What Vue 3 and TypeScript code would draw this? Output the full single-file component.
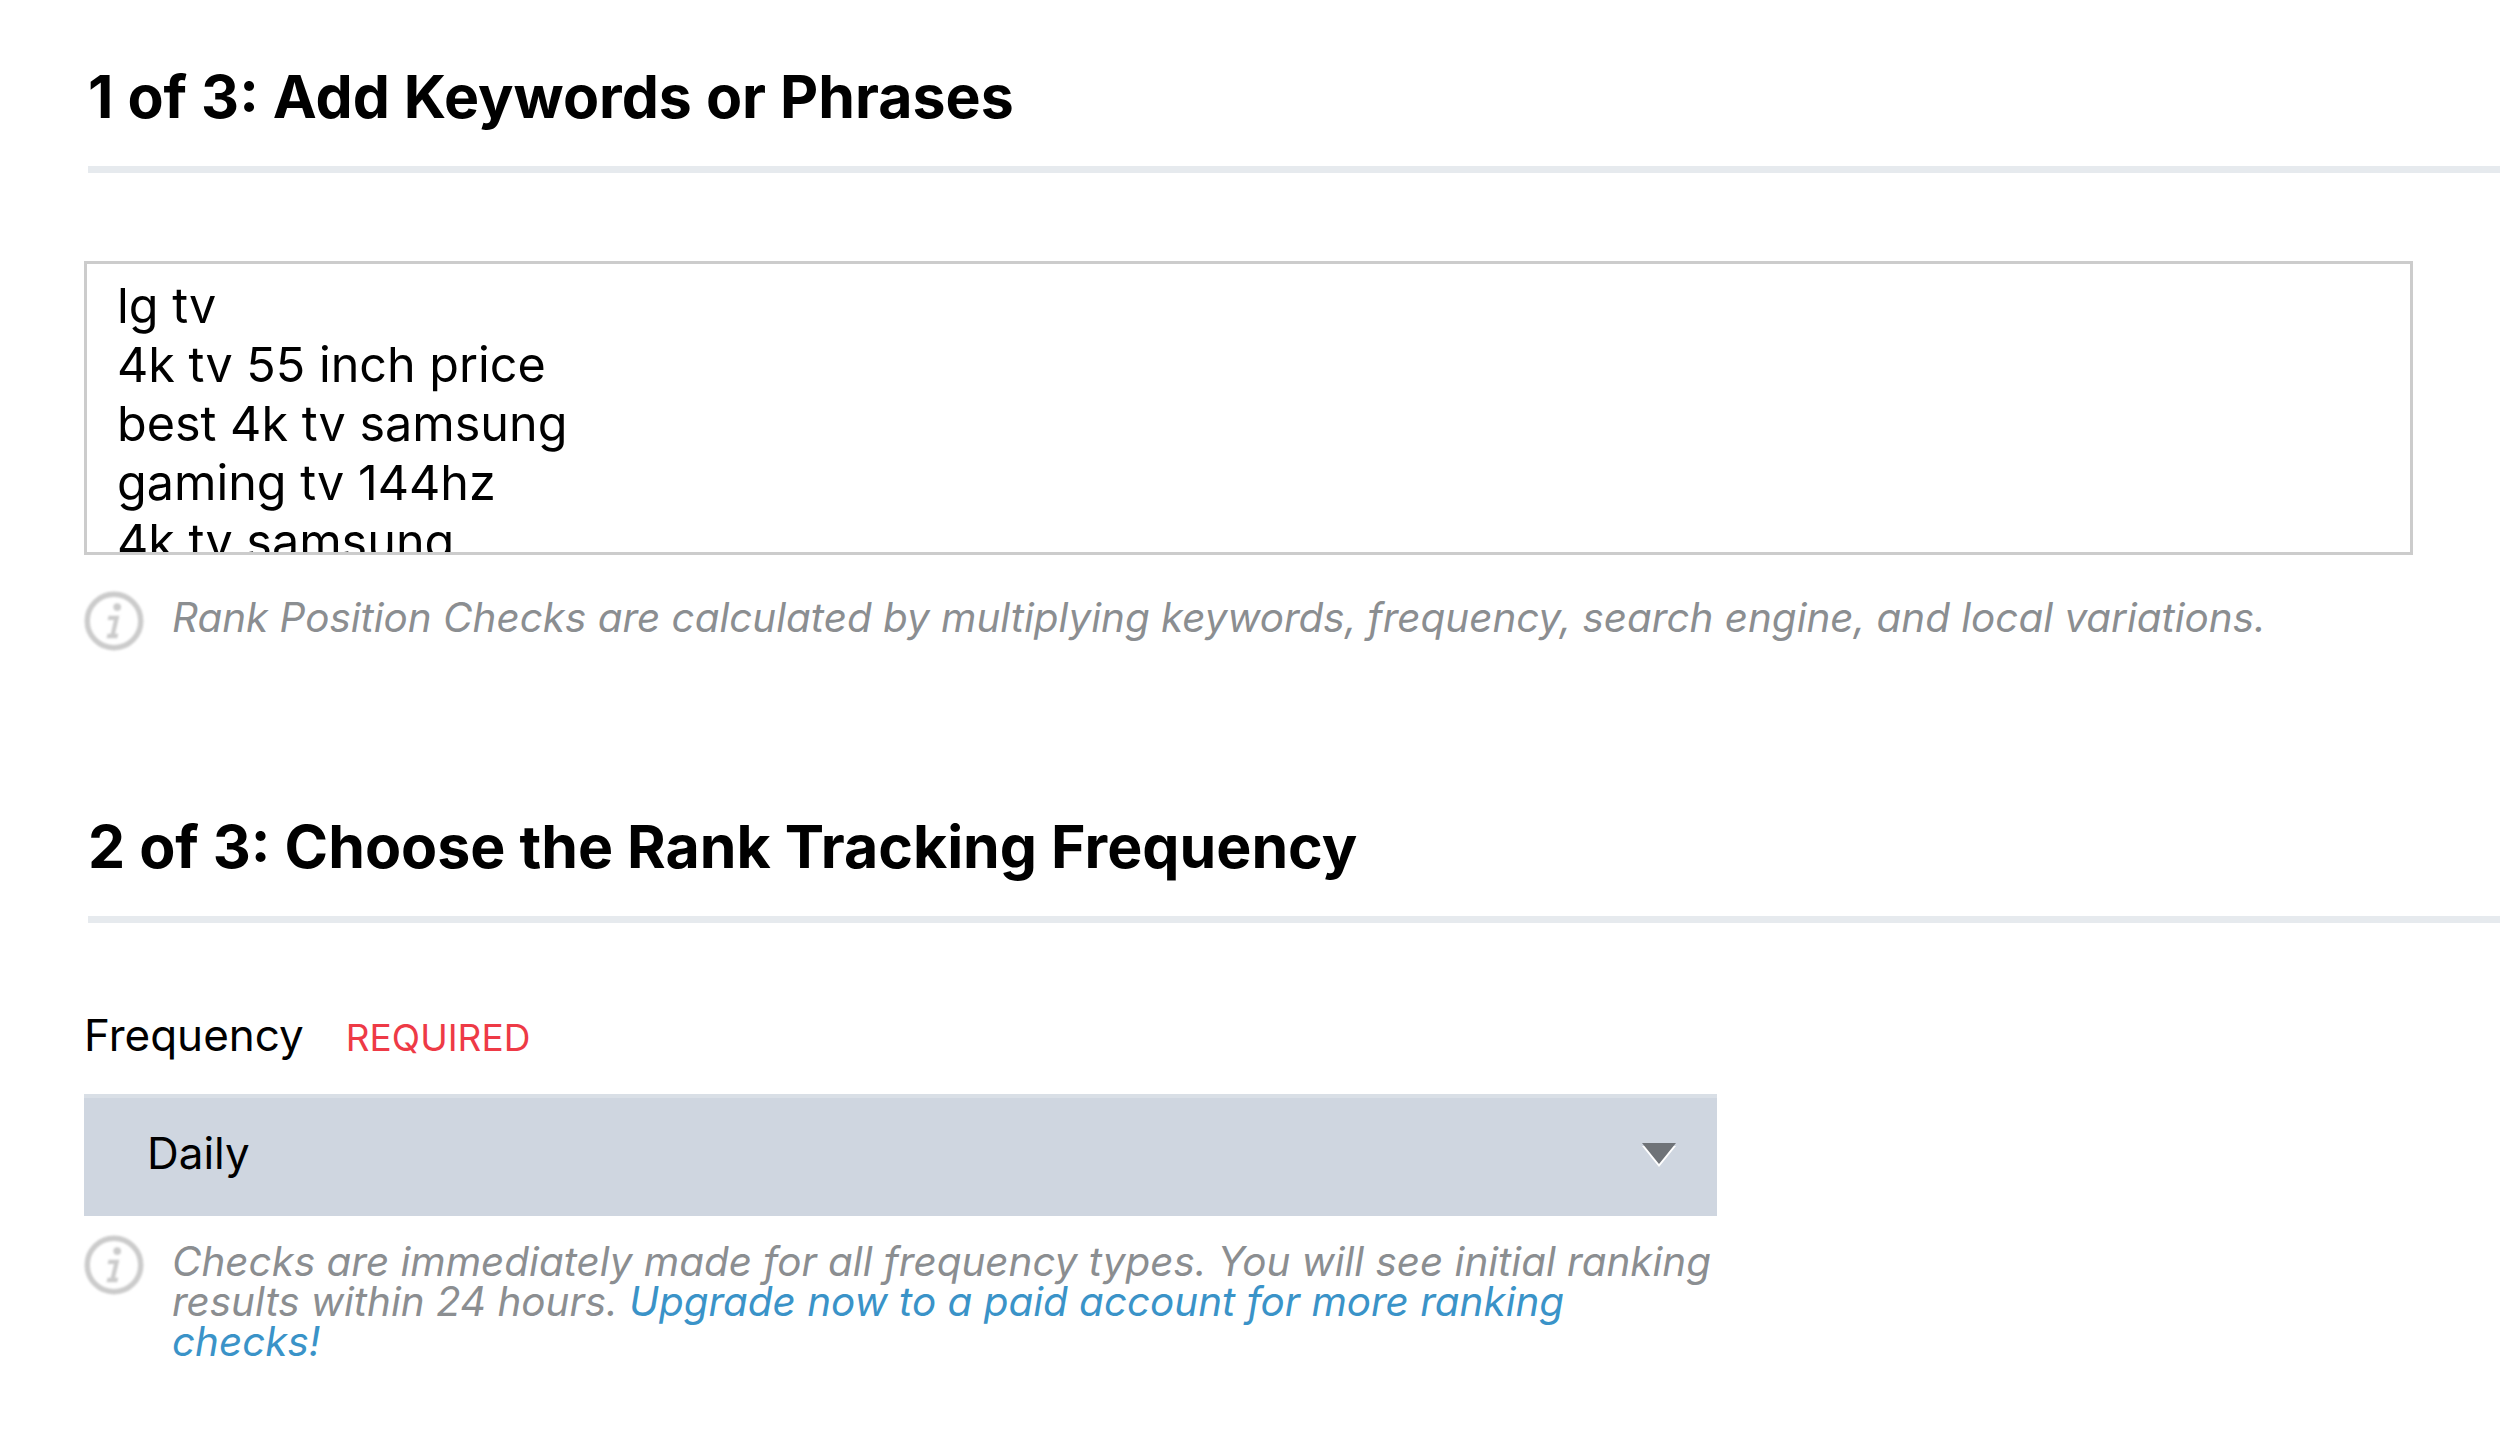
<script setup lang="ts">
const keywords = ["lg tv", "4k tv 55 inch price", "best 4k tv samsung", "gaming tv 144hz", "4k tv samsung", "oled tv"].join("\n");
</script>

<template>
  <main class="page">
    <section class="step">
      <h2 class="step-title">1 of 3: Add Keywords or Phrases</h2>
      <textarea class="keywords" readonly :value="keywords"></textarea>
      <div class="note">
        <svg class="info" viewBox="0 0 56 56" aria-hidden="true">
          <circle cx="28" cy="28" r="25" fill="none" stroke="#cbcbcb" stroke-width="5" />
          <circle cx="31" cy="15" r="3.6" fill="#cbcbcb" />
          <path d="M23 23h10l-4 17h3l-1 4H21l1-4h3l3-13h-6z" fill="#cbcbcb" />
        </svg>
        <p>Rank Position Checks are calculated by multiplying keywords, frequency, search engine, and local variations.</p>
      </div>
    </section>

    <section class="step step-two">
      <h2 class="step-title">2 of 3: Choose the Rank Tracking Frequency</h2>
      <div class="field">
        <div class="field-label">
          <span>Frequency</span>
          <span class="required">REQUIRED</span>
        </div>
        <div class="select">
          <span>Daily</span>
          <span class="caret"></span>
        </div>
        <div class="note note-wrap">
          <svg class="info" viewBox="0 0 56 56" aria-hidden="true">
            <circle cx="28" cy="28" r="25" fill="none" stroke="#cbcbcb" stroke-width="5" />
            <circle cx="31" cy="15" r="3.6" fill="#cbcbcb" />
            <path d="M23 23h10l-4 17h3l-1 4H21l1-4h3l3-13h-6z" fill="#cbcbcb" />
          </svg>
          <p>
            Checks are immediately made for all frequency types. You will see initial ranking results within 24 hours.
            <a href="#">Upgrade now to a paid account for more ranking checks!</a>
          </p>
        </div>
      </div>
    </section>
  </main>
</template>

<style scoped>
.page {
  box-sizing: border-box;
  width: 2500px;
  height: 1440px;
  overflow: hidden;
  padding: 60px 0 0 84px;
  font-family: "Inter", "Liberation Sans", sans-serif;
  color: #000;
  background: #fff;
}

.step-title {
  margin: 0 0 0 4px;
  padding-bottom: 32px;
  border-bottom: 7px solid #e6eaee;
  font-size: 59px;
  line-height: 74px;
  font-weight: 700;
}

.keywords {
  display: block;
  box-sizing: border-box;
  width: 2329px;
  height: 294px;
  margin-top: 88px;
  padding: 12px 30px;
  border: 3px solid #cccccc;
  border-radius: 0;
  outline: none;
  resize: none;
  overflow: hidden;
  font: inherit;
  font-size: 48.5px;
  line-height: 59px;
  color: #000;
}

.note {
  display: flex;
  align-items: flex-start;
  gap: 28px;
  margin-top: 36px;
  color: #8b8e91;
  font-size: 40.4px;
  line-height: 40px;
  font-style: italic;
}

.note p {
  margin: 0;
  padding-top: 7px;
}

.note a {
  color: #3a93c8;
  text-decoration: none;
}

.info {
  flex: none;
  width: 60px;
  height: 60px;
  filter: blur(0.8px);
}

.step-two {
  margin-top: 159px;
}

.field {
  width: 1633px;
  margin-top: 82px;
}

.field-label {
  display: flex;
  align-items: baseline;
  gap: 42px;
  font-size: 44px;
  line-height: 60px;
}

.required {
  color: #ee3a46;
  font-size: 37px;
}

.select {
  display: flex;
  align-items: center;
  justify-content: space-between;
  box-sizing: border-box;
  height: 122px;
  margin-top: 26px;
  padding: 0 41px 8px 63px;
  border-top: 4px solid #d9dfe6;
  background: #cfd6e0;
  font-size: 44px;
}

.caret {
  width: 0;
  height: 0;
  border-left: 17px solid transparent;
  border-right: 17px solid transparent;
  border-top: 21px solid #6f7378;
  filter: drop-shadow(0 3px 0 #ffffff);
}

.note-wrap {
  margin-top: 19px;
}
</style>

<style>
body {
  background: #fff;
}
</style>
